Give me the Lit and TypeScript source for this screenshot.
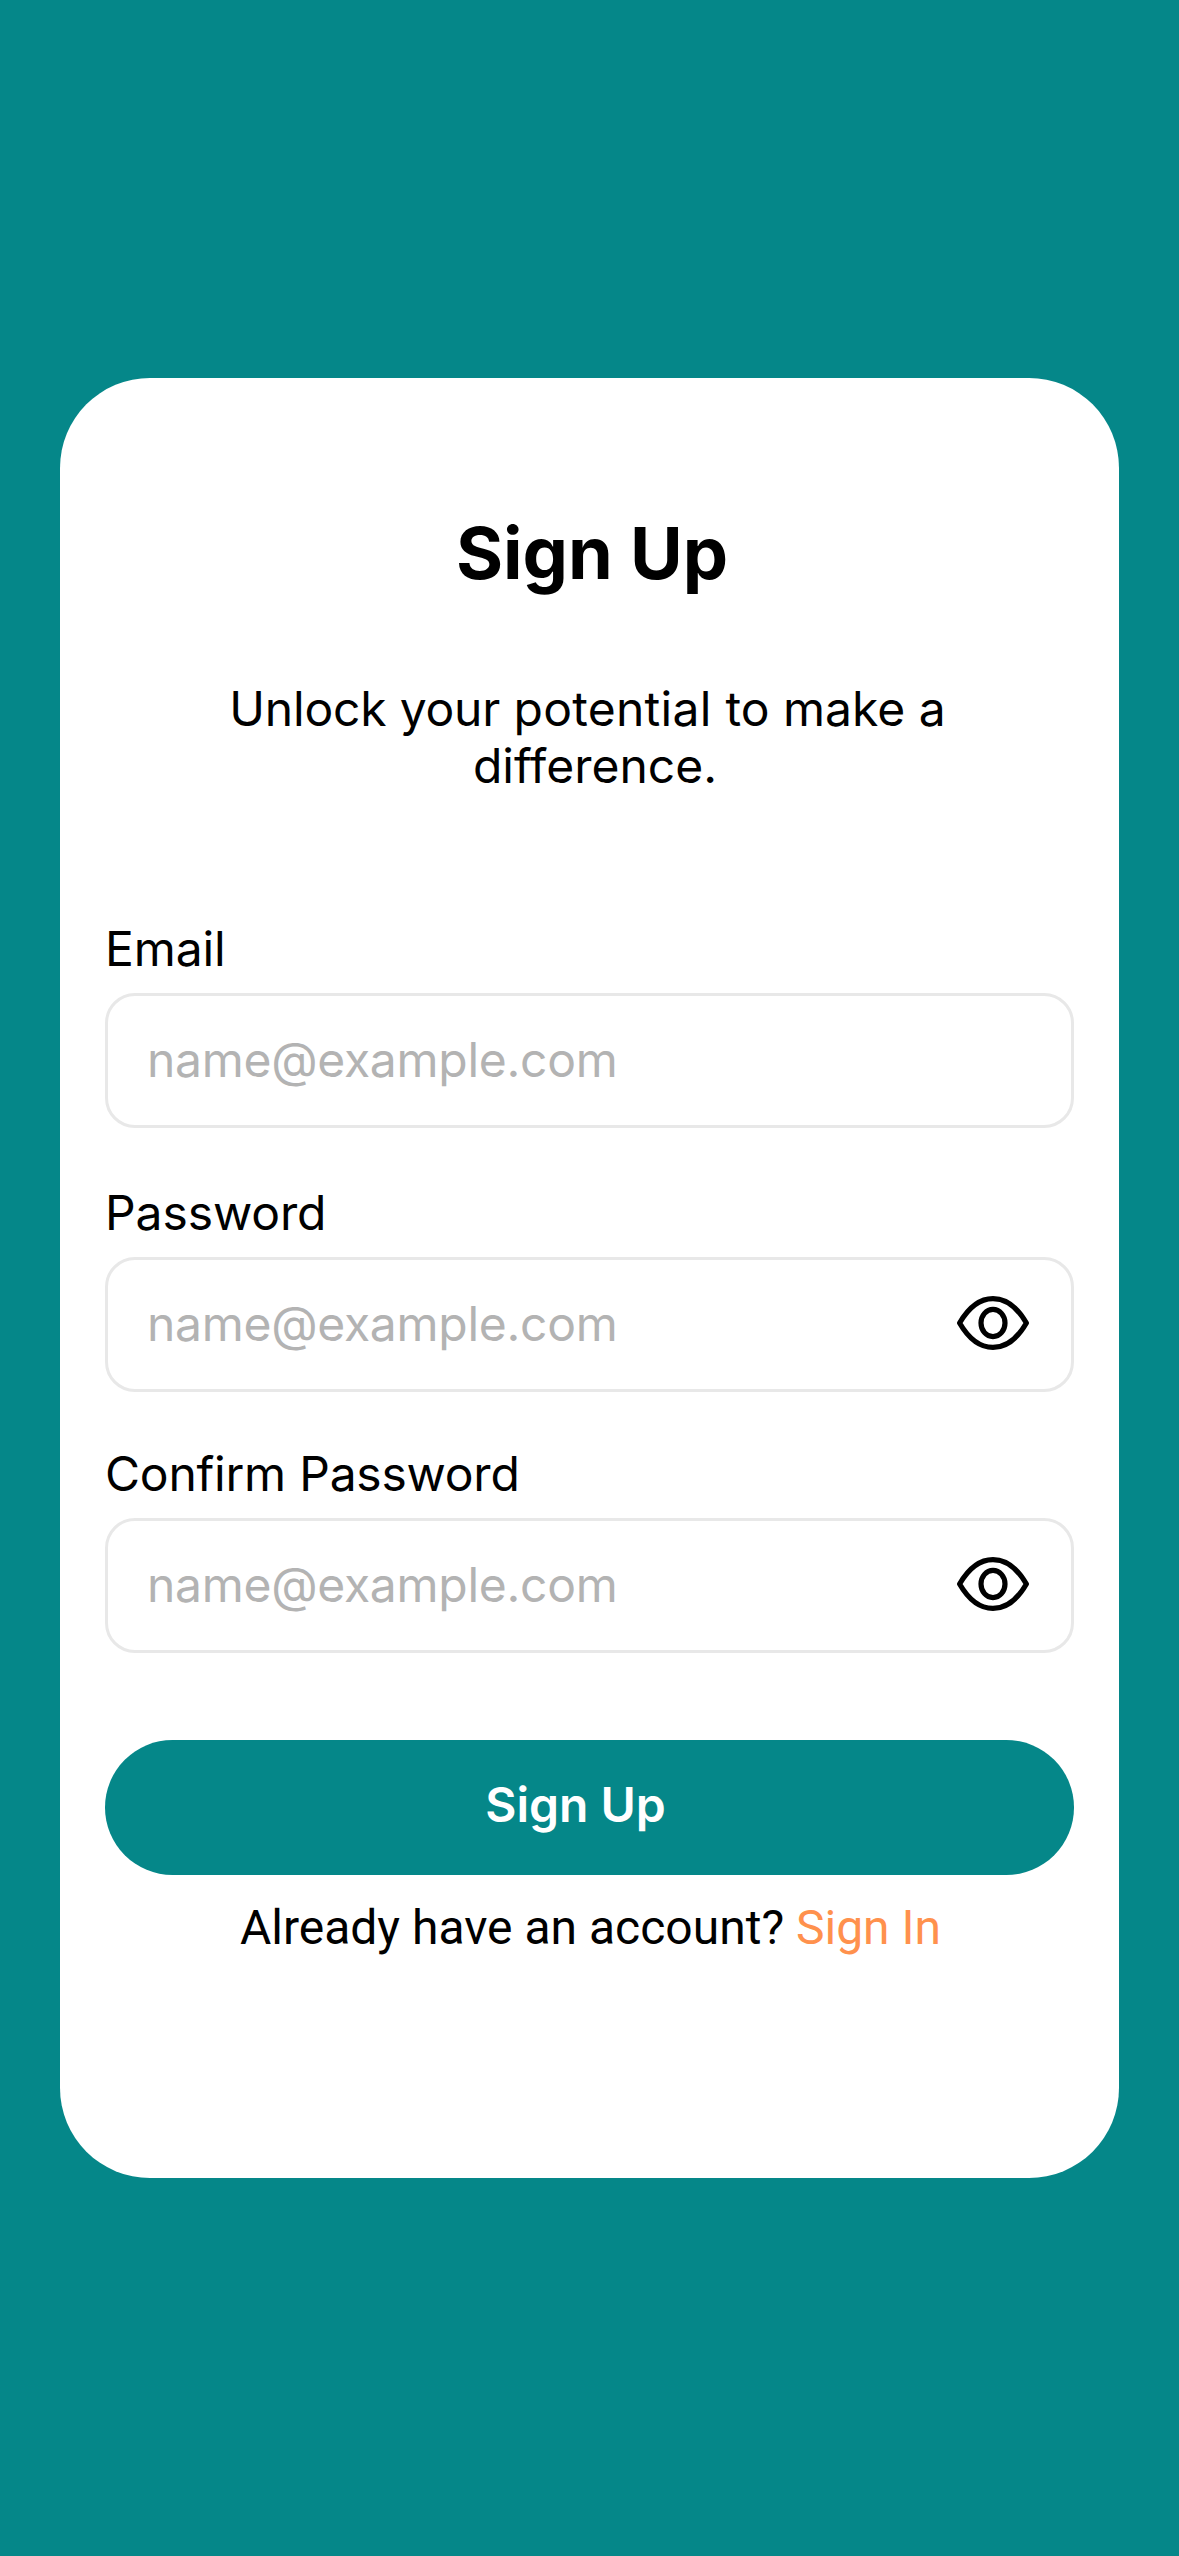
import { LitElement, html, css, nothing } from "lit";
import { customElement, property } from "lit/decorators.js";

@customElement("eye-icon")
class EyeIcon extends LitElement {
  static styles = css`
    :host { display: block; width: 72px; height: 54px; }
    .icon { display: block; width: 72px; height: 54px; }
  `;
  render() {
    return html`<svg class="icon" viewBox="0 0 72 54" fill="none" stroke="#000" stroke-width="5.2" stroke-linejoin="round">
      <path d="M2.6 27 C11 12.5 21 2.6 36 2.6 C51 2.6 61 12.5 69.4 27 C61 41.5 51 51.4 36 51.4 C21 51.4 11 41.5 2.6 27 Z" />
      <ellipse cx="36" cy="27" rx="12" ry="13.6" />
    </svg>`;
  }
}

@customElement("form-field")
class FormField extends LitElement {
  @property() label = "";
  @property() placeholder = "";
  @property({ type: Boolean }) secret = false;

  static styles = css`
    :host { display: flex; flex-direction: column; gap: 15px; }
    .label { font-size: 48px; line-height: 58px; letter-spacing: var(--label-spacing, -0.1px); color: #000; }
    .box {
      box-sizing: border-box;
      height: 135px;
      display: flex;
      align-items: center;
      justify-content: space-between;
      border: 3px solid #e8e8e8;
      border-radius: 30px;
      padding: 0 42px 3px 39px;
      background: #fff;
    }
    .placeholder {
      padding-top: 2px;
      font-size: 48px;
      line-height: 58px;
      letter-spacing: -0.28px;
      color: #b3b3b3;
    }
  `;
  render() {
    return html`
      <div class="label">${this.label}</div>
      <div class="box">
        <span class="placeholder">${this.placeholder}</span>
        ${this.secret ? html`<eye-icon></eye-icon>` : nothing}
      </div>
    `;
  }
}

@customElement("app-root")
class AppRoot extends LitElement {
  static styles = css`
    :host { display: block; font-family: Inter, "Liberation Sans", sans-serif; }
    .screen {
      box-sizing: border-box;
      width: 1179px;
      height: 2556px;
      padding: 378px 60px;
      background: #058789;
    }
    .card {
      box-sizing: border-box;
      height: 1800px;
      padding: 131px 45px 0;
      border-radius: 90px;
      background: #fff;
      display: flex;
      flex-direction: column;
    }
    .title {
      margin: 0;
      padding-left: 5px;
      text-align: center;
      font-size: 72px;
      line-height: 87px;
      font-weight: 700;
    }
    .subtitle {
      margin: 84px 0 0;
      text-align: center;
      font-size: 48px;
      line-height: 57px;
    }
    .first { display: block; padding-right: 4px; }
    .second { display: block; padding-left: 11px; }
    .tight { letter-spacing: -0.2px; }
    .loose { letter-spacing: 0.28px; }
    .fields { display: flex; flex-direction: column; margin-top: 126px; }
    .password { margin-top: 56px; }
    .confirm { margin-top: 53px; --label-spacing: -0.22px; }
    .submit {
      height: 135px;
      margin: 87px 0 0;
      padding: 0 28px 5px 0;
      border: 0;
      border-radius: 67.5px;
      background: #058789;
      color: #fff;
      font-family: inherit;
      font-size: 48px;
      line-height: 58px;
      font-weight: 600;
    }
    .footer {
      margin: 25px 0 0;
      padding-left: 2px;
      text-align: center;
      font-family: Roboto, "Liberation Sans", sans-serif;
      font-size: 48px;
      line-height: 56px;
    }
    .link { color: #ff914d; }
  `;
  render() {
    return html`
      <main class="screen">
        <section class="card">
          <h1 class="title">Sign Up</h1>
          <p class="subtitle">
            <span class="first"><span class="tight">Unlock your </span><span class="loose">potential </span>to make a</span>
            <span class="second">difference.</span>
          </p>
          <div class="fields">
            <form-field label="Email" placeholder="name@example.com"></form-field>
            <form-field class="password" label="Password" placeholder="name@example.com" secret></form-field>
            <form-field class="confirm" label="Confirm Password" placeholder="name@example.com" secret></form-field>
          </div>
          <button class="submit">Sign Up</button>
          <p class="footer">Already have an account? <span class="link">Sign In</span></p>
        </section>
      </main>
    `;
  }
}
